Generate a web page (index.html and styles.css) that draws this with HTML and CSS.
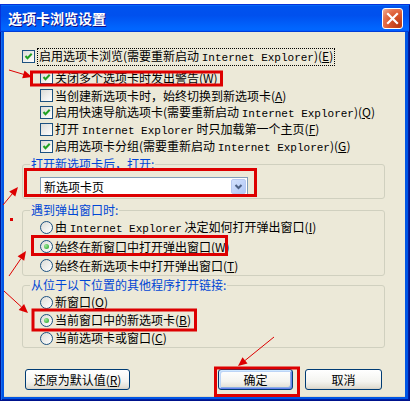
FILE: index.html
```html
<!DOCTYPE html>
<html lang="zh-CN">
<head>
<meta charset="utf-8">
<title>选项卡浏览设置</title>
<link rel="stylesheet" href="styles.css">
</head>
<body>
<div class="window">
  <div class="titlebar">
    <span class="title">选项卡浏览设置</span>
    <span class="close"><svg viewBox="0 0 19 19" width="19" height="19"><path d="M5 5 L14 14 M14 5 L5 14" stroke="#fff" stroke-width="2.2" stroke-linecap="square"/></svg></span>
  </div>
  <div class="frame">
    <div class="content">
      <div class="row top">
        <span class="cb"><svg viewBox="0 0 11 11" width="11" height="11"><path d="M2.5 5 L4.5 7.2 L8.7 2.8" stroke="#21A121" stroke-width="2" fill="none"/></svg></span>
        <span class="focus">启用选项卡浏览(需要重新启动 <span class="en">Internet Explorer</span>)(<u>E</u>)</span>
      </div>
      <div class="row sub warn">
        <span class="cb"><svg viewBox="0 0 11 11" width="11" height="11"><path d="M2.5 5 L4.5 7.2 L8.7 2.8" stroke="#21A121" stroke-width="2" fill="none"/></svg></span>
        <span>关闭多个选项卡时发出警告(<u>W</u>)</span>
      </div>
      <div class="row sub">
        <span class="cb"></span>
        <span>当创建新选项卡时，始终切换到新选项卡(<u>A</u>)</span>
      </div>
      <div class="row sub">
        <span class="cb"><svg viewBox="0 0 11 11" width="11" height="11"><path d="M2.5 5 L4.5 7.2 L8.7 2.8" stroke="#21A121" stroke-width="2" fill="none"/></svg></span>
        <span>启用快速导航选项卡(需要重新启动 <span class="en">Internet Explorer</span>)(<u>Q</u>)</span>
      </div>
      <div class="row sub">
        <span class="cb"></span>
        <span>打开 <span class="en">Internet Explorer</span> 时只加载第一个主页(<u>F</u>)</span>
      </div>
      <div class="row sub">
        <span class="cb"><svg viewBox="0 0 11 11" width="11" height="11"><path d="M2.5 5 L4.5 7.2 L8.7 2.8" stroke="#21A121" stroke-width="2" fill="none"/></svg></span>
        <span>启用选项卡分组(需要重新启动 <span class="en">Internet Explorer</span>)(<u>G</u>)</span>
      </div>

      <fieldset class="group g1">
        <legend>打开新选项卡后，打开:</legend>
        <div class="select">
          <span>新选项卡页</span>
          <span class="arrow"><svg viewBox="0 0 13 13" width="13" height="13"><path d="M3.5 5 L6.5 8 L9.5 5" stroke="#4D6185" stroke-width="2" fill="none"/></svg></span>
        </div>
      </fieldset>

      <fieldset class="group g2">
        <legend>遇到弹出窗口时:</legend>
        <div class="row"><span class="rb"></span><span>由 <span class="en">Internet Explorer</span> 决定如何打开弹出窗口(<u>I</u>)</span></div>
        <div class="row"><span class="rb on"></span><span>始终在新窗口中打开弹出窗口(<u>W</u>)</span></div>
        <div class="row"><span class="rb"></span><span>始终在新选项卡中打开弹出窗口(<u>T</u>)</span></div>
      </fieldset>

      <fieldset class="group g3">
        <legend>从位于以下位置的其他程序打开链接:</legend>
        <div class="row"><span class="rb"></span><span>新窗口(<u>O</u>)</span></div>
        <div class="row"><span class="rb on"></span><span>当前窗口中的新选项卡(<u>B</u>)</span></div>
        <div class="row"><span class="rb"></span><span>当前选项卡或窗口(<u>C</u>)</span></div>
      </fieldset>

      <div class="buttons">
        <span class="btn reset">还原为默认值(<u>R</u>)</span>
        <span class="btn ok">确定</span>
        <span class="btn cancel">取消</span>
      </div>
    </div>
  </div>
</div>

<svg class="annot" width="410" height="407" viewBox="0 0 410 407">
  <g fill="none" stroke="#DD0000" stroke-width="3">
    <rect x="31.5" y="72" width="190" height="13"/>
    <rect x="25.5" y="169.5" width="230" height="26"/>
    <rect x="32.5" y="236.5" width="194" height="18"/>
    <rect x="33" y="310" width="162.5" height="20"/>
    <rect x="215.5" y="368" width="83" height="27.5"/>
  </g>
  <g stroke="#DD0000" stroke-width="1">
    <line x1="9" y1="70" x2="24" y2="74.5"/>
    <line x1="3" y1="205" x2="12.5" y2="193.5"/>
    <line x1="9" y1="276" x2="21" y2="258.5"/>
    <line x1="4" y1="291" x2="21.5" y2="307"/>
    <line x1="274" y1="337" x2="245" y2="360.5"/>
  </g>
  <g fill="#DD0000">
    <polygon points="32,77 24.5,70.5 22.2,78.2"/>
    <polygon points="18,187 15.3,196.5 9.2,191.4"/>
    <polygon points="26,251 24.2,260.7 17.6,256.2"/>
    <polygon points="28,313 18.7,309.9 24.1,304"/>
    <polygon points="238,366 242.5,357.2 247.5,363.5"/>
    <rect x="10" y="218" width="3" height="3"/>
  </g>
</svg>
</body>
</html>
```

FILE: styles.css
```css
* { box-sizing: border-box; }

body {
  margin: 0;
  width: 410px;
  height: 407px;
  overflow: hidden;
  position: relative;
  background: #fff;
  font-family: "Noto Sans CJK SC", sans-serif;
  font-size: 12px;
  line-height: 1;
  color: #000;
}

.window {
  margin-top: 4px;
  height: 397px;
  display: flex;
  flex-direction: column;
}

.titlebar {
  height: 28px;
  flex: none;
  display: flex;
  align-items: center;
  justify-content: space-between;
  padding: 0 7px 0 8px;
  background: linear-gradient(#0997ff, #0053ee 8%, #0050ee 40%, #0066ff 88%, #0066ff 93%, #005bff 95%, #003dd7 96%, #003dd7);
  box-shadow: inset 1px 1px #0831d9, inset -1px 0 #00138c;
}

.title {
  color: #fff;
  font-weight: bold;
  font-size: 14px;
  line-height: 16px;
  text-shadow: 1px 1px #0f1089;
}

.close {
  width: 21px;
  height: 21px;
  border: 1px solid #fff;
  border-radius: 3px;
  display: flex;
  align-items: center;
  justify-content: center;
  background: radial-gradient(circle at 85% 85%, #b93a12 0%, #d9552c 45%, #e5734f 70%, #f3b39a 100%);
}

.close svg { display: block; }

.frame {
  flex: 1;
  display: flex;
  padding: 0 5px 4px 4px;
  background: #0055e5;
  box-shadow: inset 1px 0 #00138c, inset -1px -1px #00138c, inset 2px 0 #166aee, inset -2px -2px #001ea0;
}

.content {
  flex: 1;
  background: #ece9d8;
  padding-top: 16px;
  display: flex;
  flex-direction: column;
  box-shadow: inset 0 -1px #ded9c4;
}

.row {
  display: flex;
  align-items: center;
  height: 17px;
  white-space: nowrap;
  flex: none;
}

.row.top { margin-left: 18px; margin-bottom: 4px; }
.row.sub { margin-left: 36px; }
.row.warn { margin-bottom: 1px; }

.cb {
  width: 13px;
  height: 13px;
  flex: none;
  border: 1px solid #1c5180;
  background: linear-gradient(135deg, #dcdcd7, #ffffff);
  margin-right: 2px;
  display: flex;
}

.cb svg { display: block; }

.focus {
  border: 1px dotted #000;
  padding: 0 1px;
  line-height: 14px;
}

.en {
  font-family: "Liberation Mono", monospace;
  font-size: 11px;
}

.group {
  margin: 0 20px 0 18px;
  border: 1px solid #d0d0bf;
  border-radius: 3px;
  padding: 0 0 0 7px;
  min-width: 0;
  flex: none;
}

.group legend {
  color: #0046d5;
  padding: 0 1px;
  line-height: 14px;
  height: 14px;
}

.group .row { margin-left: 10px; }

.g1 { margin-top: 2px; padding-top: 6px; padding-bottom: 2px; }
.g2 { margin-top: 4px; padding-top: 1px; }
.g3 { margin-top: 2px; padding-top: 1px; }
.g2 .row { height: 19px; }
.g3 .row { height: 18px; }

.select {
  margin-left: 10px;
  width: 208px;
  height: 19px;
  border: 1px solid #7f9db9;
  background: #fff;
  display: flex;
  align-items: center;
  justify-content: space-between;
  padding: 0 1px 0 3px;
}

.arrow {
  width: 15px;
  height: 15px;
  border: 1px solid #b7c9f2;
  border-radius: 2px;
  background: linear-gradient(135deg, #d3e1fd, #b1c8f6);
  display: flex;
  align-items: center;
  justify-content: center;
}

.arrow svg { display: block; }

.rb {
  width: 13px;
  height: 13px;
  flex: none;
  border-radius: 50%;
  border: 1px solid #1c5180;
  background: linear-gradient(135deg, #dcdcd7, #ffffff);
  margin-right: 2px;
  display: flex;
  align-items: center;
  justify-content: center;
}

.rb.on::after {
  content: "";
  width: 5px;
  height: 5px;
  border-radius: 50%;
  background: radial-gradient(circle at 35% 35%, #9be89a, #21a121);
}

.buttons {
  display: flex;
  margin: 21px 23px 0 21px;
  flex: none;
}

.btn {
  height: 21px;
  border: 1px solid #003c74;
  border-radius: 3px;
  background: linear-gradient(#ffffff, #f4f4f0 60%, #e3e0d6 90%, #d6d0c5);
  display: flex;
  align-items: center;
  justify-content: center;
  white-space: nowrap;
}

.reset { width: 105px; }

.ok {
  width: 75px;
  margin-left: auto;
  box-shadow: inset 1px 1px #cee7ff, inset -1px -1px #6982ee, inset 2px 2px #bcd4f6, inset -2px -2px #89ade4;
}

.cancel { width: 77px; margin-left: 12px; }

.annot {
  position: absolute;
  left: 0;
  top: 0;
  pointer-events: none;
}
```
